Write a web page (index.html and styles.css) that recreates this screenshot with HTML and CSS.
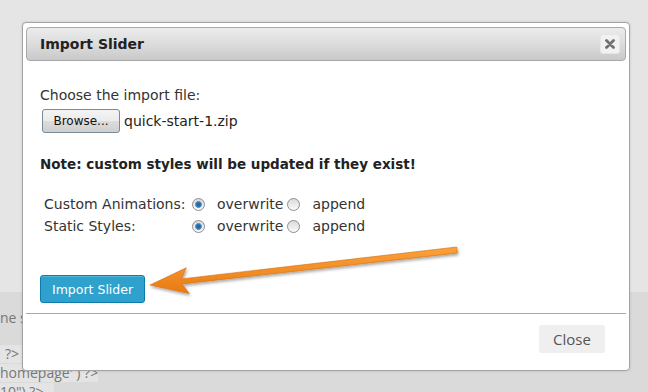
FILE: index.html
```html
<!DOCTYPE html>
<html lang="en">
<head>
    <meta charset="UTF-8">
    <meta name="viewport" content="width=device-width, initial-scale=1.0">
    <title>Import Slider</title>
    <link rel="stylesheet" href="styles.css">
</head>
<body>
    <!-- page behind the modal -->
    <div class="page-behind">
        <div class="page-top"></div>
        <div class="page-code">
            <div class="code-line plain">ne s</div>
            <div class="code-line band short">?&gt;</div>
            <div class="code-line band wide">homepage' ) ?&gt;</div>
            <div class="code-line band mid">10") ?&gt;</div>
        </div>
    </div>

    <div class="dialog">
        <div class="dialog-title">
            <span class="title-text">Import Slider</span>
            <button class="title-close" type="button" aria-label="close">
                <svg width="10" height="10" viewBox="0 0 10 10">
                    <path d="M1.5 1.5 L8.5 8.5 M8.5 1.5 L1.5 8.5" stroke="#707070" stroke-width="2.8" stroke-linecap="round"/>
                </svg>
            </button>
        </div>

        <div class="dialog-body">
            <div class="field-label">Choose the import file:</div>
            <div class="file-row">
                <button class="browse-btn" type="button">Browse...</button>
                <span class="file-name">quick-start-1.zip</span>
            </div>

            <div class="note">Note: custom styles will be updated if they exist!</div>

            <div class="options">
                <div class="option-row">
                    <span class="option-label">Custom Animations:</span>
                    <input type="radio" name="anim" checked>
                    <span class="option-text">overwrite</span>
                    <input type="radio" name="anim">
                    <span class="option-text">append</span>
                </div>
                <div class="option-row">
                    <span class="option-label">Static Styles:</span>
                    <input type="radio" name="static" checked>
                    <span class="option-text">overwrite</span>
                    <input type="radio" name="static">
                    <span class="option-text">append</span>
                </div>
            </div>

            <button class="import-btn" type="button">Import Slider</button>
        </div>

        <div class="dialog-footer">
            <button class="close-btn" type="button">Close</button>
        </div>
    </div>

    <!-- orange arrow pointing at the button -->
    <svg class="arrow" width="648" height="392" viewBox="0 0 648 392">
        <defs>
            <linearGradient id="arrowFill" x1="0" y1="0" x2="0" y2="1">
                <stop offset="0" stop-color="#fba23c"/>
                <stop offset="1" stop-color="#e97a12"/>
            </linearGradient>
            <filter id="arrowShadow" x="-10%" y="-50%" width="120%" height="200%">
                <feDropShadow dx="1" dy="2" stdDeviation="1.6" flood-color="#000" flood-opacity="0.35"/>
            </filter>
        </defs>
        <polygon
            points="150,285 189.2,293.6 182.1,283.9 457.3,253 456.7,247 181.5,278.9 186.3,267.8"
            fill="url(#arrowFill)" stroke="#d36d0c" stroke-width="0.6" stroke-linejoin="round"
            filter="url(#arrowShadow)"/>
    </svg>
</body>
</html>
```

FILE: styles.css
```css
* {
    margin: 0;
    padding: 0;
    box-sizing: border-box;
}

body {
    width: 648px;
    height: 392px;
    overflow: hidden;
    background: #e5e5e5;
    font-family: 'DejaVu Sans', Verdana, sans-serif;
    position: relative;
}

/* ---------- page behind ---------- */
.page-top {
    height: 292px;
    background: #e5e5e5;
}

.page-code {
    height: 100px;
    background: #dadada;
    padding-top: 17px;
    font-family: 'Open Sans', sans-serif;
    font-size: 14px;
    color: #777;
}

.code-line {
    height: 18px;
    line-height: 18px;
    white-space: nowrap;
}

.code-line.plain {
    margin-bottom: 18px;
}

.code-line.band {
    background: #e4e4e4;
    margin-bottom: 1px;
}

.code-line.short {
    width: 66px;
    padding-left: 5px;
}

.code-line.wide {
    width: 98px;
}

.code-line.mid {
    width: 54px;
}

/* ---------- dialog ---------- */
.dialog {
    position: absolute;
    left: 22px;
    top: 22px;
    width: 608px;
    height: 349px;
    background: #fff;
    border: 1px solid #a3a3a3;
    border-radius: 4px;
    padding: 4px 3px 0;
    box-shadow: 0 0 3px rgba(0, 0, 0, 0.12);
}

.dialog-title {
    height: 34px;
    display: flex;
    align-items: center;
    justify-content: space-between;
    padding: 0 5px 0 13px;
    border: 1px solid #a9a9a9;
    border-radius: 4px;
    background: linear-gradient(to bottom, #ececec 0%, #dcdcdc 50%, #c9c9c9 100%);
}

.title-text {
    font-weight: bold;
    font-size: 14px;
    color: #222;
}

.title-close {
    width: 20px;
    height: 20px;
    border: 1px solid #e6e6e6;
    border-radius: 3px;
    background: #f1f1f1;
    display: flex;
    align-items: center;
    justify-content: center;
}

.dialog-body {
    padding: 25px 14px 0;
    height: 253px;
    border-bottom: 1px solid #a9a9a9;
    font-size: 14px;
    color: #333;
}

.field-label {
    line-height: 18px;
}

.file-row {
    display: flex;
    align-items: center;
    gap: 4px;
    margin-top: 5px;
    margin-left: 2px;
}

.browse-btn {
    width: 78px;
    height: 24px;
    border: 1px solid #7a8a99;
    border-radius: 3px;
    background: linear-gradient(to bottom, #f4f4f4 0%, #ebebeb 48%, #dcdcdc 52%, #cfcfcf 100%);
    font-family: 'DejaVu Sans', sans-serif;
    font-size: 12px;
    color: #111;
}

.file-name {
    font-size: 14px;
    color: #222;
}

.note {
    margin-top: 22px;
    line-height: 18px;
    font-size: 13.5px;
    font-weight: bold;
    color: #222;
}

.options {
    margin-top: 20px;
    padding-left: 4px;
}

.option-row {
    display: flex;
    align-items: center;
    height: 22px;
}

.option-label {
    width: 148px;
}

.option-row input[type="radio"] {
    appearance: none;
    -webkit-appearance: none;
    width: 13px;
    height: 13px;
    border: 1px solid #8d8d8d;
    border-radius: 50%;
    background: linear-gradient(to bottom, #dadada, #fafafa);
    margin-right: 12px;
}

.option-row input[type="radio"]:checked {
    background:
        radial-gradient(circle, #2a5f95 0, #2f6fae 2px, #6aa2d6 3.2px, transparent 3.8px),
        linear-gradient(to bottom, #dadada, #fafafa);
}

.option-text {
    margin-right: 4px;
}

.import-btn {
    margin-top: 38px;
    height: 28px;
    padding: 0 11px;
    border: 1px solid #0b7cac;
    border-radius: 3px;
    background: #2ea2cc;
    color: #fff;
    font-family: 'DejaVu Sans', sans-serif;
    font-size: 12.5px;
    box-shadow: inset 0 1px 0 rgba(120, 200, 230, 0.5);
}

.dialog-footer {
    display: flex;
    justify-content: flex-end;
    padding: 11px 21px 0 0;
}

.close-btn {
    width: 66px;
    height: 28px;
    border: none;
    border-radius: 3px;
    background: #efefef;
    font-family: 'Open Sans', sans-serif;
    font-size: 15px;
    color: #555;
}

/* ---------- overlay arrow ---------- */
.arrow {
    position: absolute;
    left: 0;
    top: 0;
    pointer-events: none;
}
```
